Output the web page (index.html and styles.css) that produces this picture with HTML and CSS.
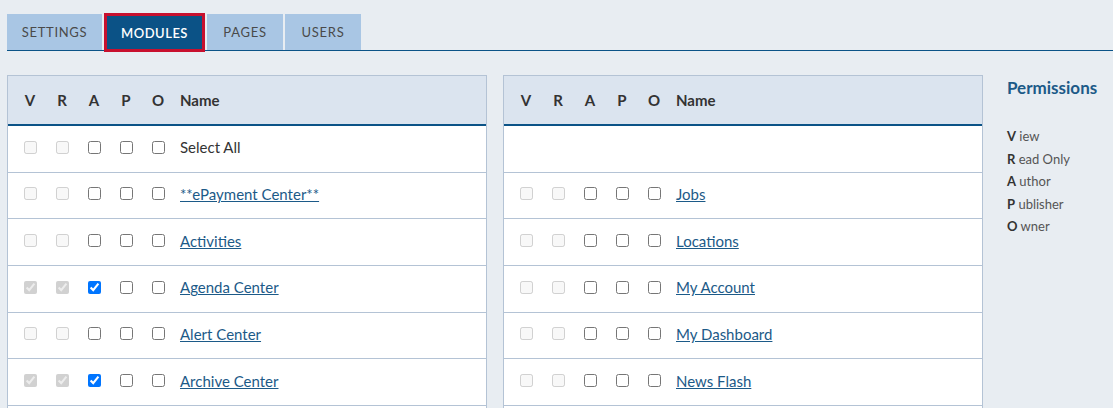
FILE: index.html
```html
<!DOCTYPE html>
<html lang="en">
<head>
<meta charset="utf-8">
<title>Modules permissions</title>
<link rel="stylesheet" href="styles.css">
</head>
<body>
<div class="page">
  <nav class="tabs">
    <a class="tab tab-wide">SETTINGS</a>
    <a class="tab tab-wide active">MODULES</a>
    <a class="tab">PAGES</a>
    <a class="tab">USERS</a>
  </nav>

  <div class="content">
    <div class="perm-table">
      <div class="row head">
        <span class="c">V</span><span class="c">R</span><span class="c">A</span><span class="c">P</span><span class="c">O</span><span class="name">Name</span>
      </div>
      <div class="row">
        <span class="c"><input type="checkbox" disabled></span><span class="c"><input type="checkbox" disabled></span><span class="c"><input type="checkbox"></span><span class="c"><input type="checkbox"></span><span class="c"><input type="checkbox"></span><span class="name">Select All</span>
      </div>
      <div class="row">
        <span class="c"><input type="checkbox" disabled></span><span class="c"><input type="checkbox" disabled></span><span class="c"><input type="checkbox"></span><span class="c"><input type="checkbox"></span><span class="c"><input type="checkbox"></span><span class="name"><a href="#">**ePayment Center**</a></span>
      </div>
      <div class="row">
        <span class="c"><input type="checkbox" disabled></span><span class="c"><input type="checkbox" disabled></span><span class="c"><input type="checkbox"></span><span class="c"><input type="checkbox"></span><span class="c"><input type="checkbox"></span><span class="name"><a href="#">Activities</a></span>
      </div>
      <div class="row">
        <span class="c"><input type="checkbox" disabled checked></span><span class="c"><input type="checkbox" disabled checked></span><span class="c"><input type="checkbox" checked></span><span class="c"><input type="checkbox"></span><span class="c"><input type="checkbox"></span><span class="name"><a href="#">Agenda Center</a></span>
      </div>
      <div class="row">
        <span class="c"><input type="checkbox" disabled></span><span class="c"><input type="checkbox" disabled></span><span class="c"><input type="checkbox"></span><span class="c"><input type="checkbox"></span><span class="c"><input type="checkbox"></span><span class="name"><a href="#">Alert Center</a></span>
      </div>
      <div class="row">
        <span class="c"><input type="checkbox" disabled checked></span><span class="c"><input type="checkbox" disabled checked></span><span class="c"><input type="checkbox" checked></span><span class="c"><input type="checkbox"></span><span class="c"><input type="checkbox"></span><span class="name"><a href="#">Archive Center</a></span>
      </div>
      <div class="row"></div>
    </div>

    <div class="perm-table">
      <div class="row head">
        <span class="c">V</span><span class="c">R</span><span class="c">A</span><span class="c">P</span><span class="c">O</span><span class="name">Name</span>
      </div>
      <div class="row"></div>
      <div class="row">
        <span class="c"><input type="checkbox" disabled></span><span class="c"><input type="checkbox" disabled></span><span class="c"><input type="checkbox"></span><span class="c"><input type="checkbox"></span><span class="c"><input type="checkbox"></span><span class="name"><a href="#">Jobs</a></span>
      </div>
      <div class="row">
        <span class="c"><input type="checkbox" disabled></span><span class="c"><input type="checkbox" disabled></span><span class="c"><input type="checkbox"></span><span class="c"><input type="checkbox"></span><span class="c"><input type="checkbox"></span><span class="name"><a href="#">Locations</a></span>
      </div>
      <div class="row">
        <span class="c"><input type="checkbox" disabled></span><span class="c"><input type="checkbox" disabled></span><span class="c"><input type="checkbox"></span><span class="c"><input type="checkbox"></span><span class="c"><input type="checkbox"></span><span class="name"><a href="#">My Account</a></span>
      </div>
      <div class="row">
        <span class="c"><input type="checkbox" disabled></span><span class="c"><input type="checkbox" disabled></span><span class="c"><input type="checkbox"></span><span class="c"><input type="checkbox"></span><span class="c"><input type="checkbox"></span><span class="name"><a href="#">My Dashboard</a></span>
      </div>
      <div class="row">
        <span class="c"><input type="checkbox" disabled></span><span class="c"><input type="checkbox" disabled></span><span class="c"><input type="checkbox"></span><span class="c"><input type="checkbox"></span><span class="c"><input type="checkbox"></span><span class="name"><a href="#">News Flash</a></span>
      </div>
      <div class="row"></div>
    </div>

    <aside class="legend">
      <h3>Permissions</h3>
      <ul>
        <li><b>V</b> iew</li>
        <li><b>R</b> ead Only</li>
        <li><b>A</b> uthor</li>
        <li><b>P</b> ublisher</li>
        <li><b>O</b> wner</li>
      </ul>
    </aside>
  </div>
</div>
</body>
</html>
```

FILE: styles.css
```css
html, body {
  margin: 0;
  padding: 0;
  background: #e8edf2;
  font-family: Lato, "Open Sans", sans-serif;
  color: #333;
  overflow: hidden;
}

.page {
  padding: 13px 0 0 7px;
}

.tabs {
  display: flex;
  align-items: flex-end;
  gap: 2px;
  border-bottom: 1px solid #0b5387;
  height: 37px;
}

.tab {
  display: flex;
  align-items: center;
  justify-content: center;
  box-sizing: border-box;
  width: 76px;
  height: 36px;
  background: #a9c6e4;
  color: #4a4a4a;
  font-size: 13px;
  letter-spacing: 0.7px;
  text-decoration: none;
}

.tab.tab-wide {
  width: 95px;
}

.tab.active {
  width: 101px;
  height: 39px;
  margin-bottom: -2px;
  background: #0b5286;
  color: #fff;
  border: 3px solid #c8102e;
  font-weight: 600;
  letter-spacing: 0.5px;
}

.content {
  display: flex;
  align-items: flex-start;
  gap: 16px;
  margin-top: 24px;
}

.perm-table {
  width: 480px;
  box-sizing: border-box;
  border: 1px solid #b4c3d5;
  border-bottom: none;
  background: #fff;
  flex: none;
}

.row {
  display: grid;
  grid-template-columns: repeat(5, 32px) 1fr;
  align-items: center;
  box-sizing: border-box;
  height: 46.67px;
  padding-left: 6px;
  padding-bottom: 3px;
  border-bottom: 1px solid #b4c3d5;
  font-size: 15px;
}

.row.head {
  height: 50px;
  padding-bottom: 0;
  background: #dbe4ef;
  border-bottom: 2px solid #0b5387;
  font-weight: 700;
  font-size: 15px;
  color: #333;
}

.c {
  display: flex;
  justify-content: center;
  align-items: center;
}

.c input {
  margin: 0;
  width: 13px;
  height: 13px;
}

.name {
  padding-left: 6px;
  white-space: nowrap;
}

.name a {
  color: #1c5a88;
  text-decoration: underline;
}

.legend {
  margin-left: 8px;
  padding-top: 2px;
}

.legend h3 {
  margin: 0 0 27px;
  font-size: 17px;
  font-weight: 700;
  color: #1c5a88;
}

.legend ul {
  list-style: none;
  margin: 0;
  padding: 0;
}

.legend li {
  font-size: 13px;
  line-height: 22.5px;
  color: #555;
}

.legend b {
  color: #333;
  font-weight: 700;
}
```
